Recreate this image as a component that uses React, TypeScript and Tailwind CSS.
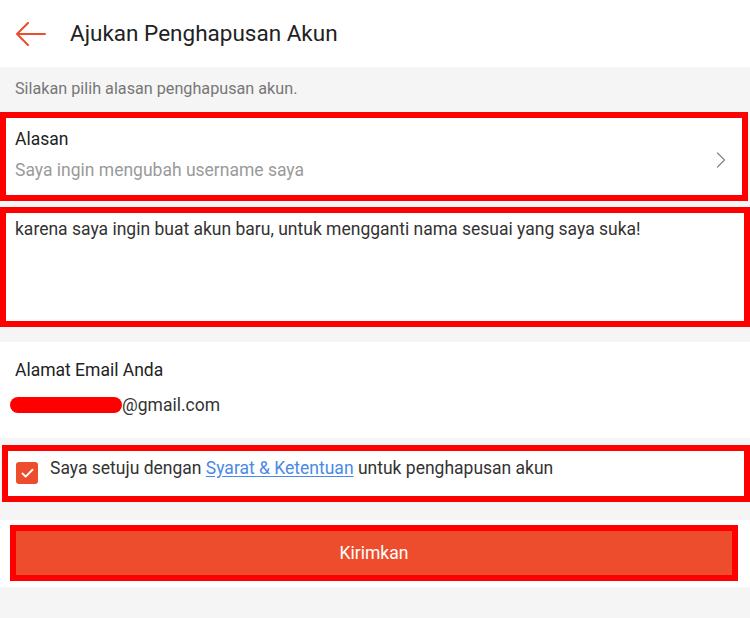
import React from 'react';
import { ChevronRight, Check } from 'lucide-react';

export default function App() {
  return (
    <div className="w-[750px] h-[618px] bg-[#f5f5f5] font-['Roboto',sans-serif] overflow-hidden">
      {/* Header */}
      <div className="h-[67px] bg-white flex items-center">
        <svg className="ml-[15px]" width="31" height="24" viewBox="0 0 31 24" fill="none">
          <path d="M30 12H2M13 1L2 12l11 11" stroke="#ee4d2d" strokeWidth="2" strokeLinecap="round" strokeLinejoin="round" />
        </svg>
        <span className="ml-[24px] text-[22.5px] text-[#222]">Ajukan Penghapusan Akun</span>
      </div>

      {/* Hint */}
      <div className="h-[42px] flex items-center px-[15px] pt-[3px] text-[16.2px] text-[#777]">
        Silakan pilih alasan penghapusan akun.
      </div>

      {/* Reason */}
      <div className="mt-[3px] w-[748px] border-[6px] border-[#ff0000] bg-white pl-[9px] pr-[7px] pt-[9px] pb-[13px] flex items-center">
        <div className="flex-1">
          <div className="text-[17.5px] leading-[24px] text-[#222]">Alasan</div>
          <div className="mt-[7px] text-[17.5px] leading-[24px] text-[#9a9a9a]">Saya ingin mengubah username saya</div>
        </div>
        <ChevronRight className="mt-[10px] w-[28px] h-[28px] text-[#888]" strokeWidth={1.1} />
      </div>

      {/* Reason detail */}
      <div className="mt-[6px] w-[750px] h-[120px] border-[6px] border-[#ff0000] bg-white pl-[9px] pt-[4px]">
        <div className="text-[17.5px] leading-[24px] text-[#333]">
          karena saya ingin buat akun baru, untuk mengganti nama sesuai yang saya suka!
        </div>
      </div>

      {/* Email */}
      <div className="mt-[15px] h-[96px] bg-white px-[15px] pt-[16px]">
        <div className="text-[17.5px] leading-[24px] text-[#222]">Alamat Email Anda</div>
        <div className="mt-[11px] flex items-center text-[17.5px] leading-[24px] text-[#333]">
          <span className="ml-[-5px] w-[112px] h-[16px] rounded-full bg-[#ff0000]" />
          <span>@gmail.com</span>
        </div>
      </div>

      {/* Agreement */}
      <div className="mt-[7px] ml-[2px] w-[748px] h-[57px] border-[6px] border-[#ff0000] bg-white pl-[8px] flex items-start">
        <div className="mt-[11px] w-[22px] h-[22px] rounded-[3px] bg-[#ee4d2d] flex items-center justify-center">
          <Check className="w-[15px] h-[15px] text-white" strokeWidth={3} />
        </div>
        <div className="ml-[12px] mt-[5px] text-[17.5px] leading-[24px] text-[#333]">
          Saya setuju dengan{' '}
          <span className="text-[#4a8ae6] underline underline-offset-2">Syarat &amp; Ketentuan</span>{' '}
          untuk penghapusan akun
        </div>
      </div>

      {/* Submit */}
      <div className="mt-[18px] h-[67px] bg-white pt-[5px] pl-[10px]">
        <button className="w-[728px] h-[56px] border-[6px] border-[#ff0000] bg-[#ee4d2d] text-white text-[17.5px] flex items-center justify-center">
          Kirimkan
        </button>
      </div>
    </div>
  );
}
